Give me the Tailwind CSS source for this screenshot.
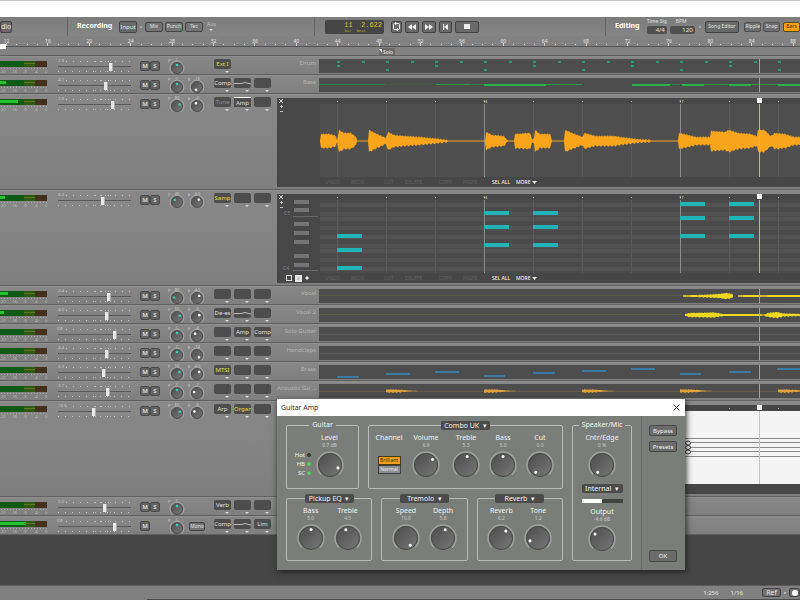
<!DOCTYPE html>
<html lang="en">
<head>
    <meta charset="UTF-8">
    <title>Song - Guitar Amp</title>
    <script src="https://cdn.jsdelivr.net/npm/@tailwindcss/browser@4"></script>
</head>
<body class="relative min-h-screen flex flex-col overflow-hidden bg-[#464646] font-['Noto_Sans','Open_Sans',sans-serif] text-[6px] leading-none text-[#e4e4e4]">

<!-- Window strip -->
<div class="h-[17px] border-t border-[#c8c8c8] bg-white"></div>

<!-- Toolbar -->
<header class="flex h-[19px] overflow-hidden bg-linear-to-b from-[#7c7c7c] to-[#858585] whitespace-nowrap">
    <div class="flex w-[68px] shrink-0 items-center border-r border-[#646464]">
        <button class="h-[12px] w-[12px] rounded-xs border border-[#454545] bg-[#6a6a6a] text-[7px]">dio</button>
    </div>
    <div class="flex flex-1 items-center border-r border-[#646464] pl-[9px]">
        <h2 class="w-[42px] pb-[3px] text-[7px] font-bold text-white">Recording</h2>
        <button class="h-[12px] w-[18px] rounded-xs border border-[#454545] bg-[#6a6a6a]">Input</button>
        <span class="mx-[3px] size-[2px] bg-[#a5a5a5]"></span>
        <div class="flex gap-[2px]">
            <button class="h-[10px] w-[18px] rounded-xs border border-[#454545] bg-[#747474] text-[5px]">Mix</button>
            <button class="h-[10px] w-[18px] rounded-xs border border-[#454545] bg-[#747474] text-[5px]">Punch</button>
            <button class="h-[10px] w-[18px] rounded-xs border border-[#454545] bg-[#747474] text-[5px]">Tec</button>
        </div>
        <button class="ml-1 flex flex-col items-center gap-[2px] text-[5px] text-[#c4c4c4]">Aux
            <svg class="h-[2px] w-[4px]"><path d="M0 0h4L2 2z" fill="#ddd"/></svg>
        </button>
    </div>
    <div class="flex w-[291px] shrink-0 items-center border-r border-[#646464] pl-[10px]">
        <div class="mr-[7px] flex h-[14px] w-[59px] flex-col items-end rounded-xs bg-[#454545] pt-px pr-[2px] font-['Liberation_Mono',monospace] text-[#d2c628]">
            <span class="text-[7px] leading-[8px] whitespace-pre">11  2.622</span>
            <span class="pr-[16px] text-[4px] leading-[4px] whitespace-pre text-[#b3a92c]">bar  beat</span>
        </div>
        <div class="flex gap-[3px]">
            <button aria-label="Loop" class="grid h-[12px] w-[11px] place-items-center rounded-xs border border-[#424242] bg-[#6a6a6a]">
                <svg class="h-[9px] w-[9px]" fill="none" stroke="#eee"><path d="M3 1.5H2.500A1 1 0 0 0 1.500 2.500V6.500A1 1 0 0 0 2.500 7.500H4M5 1.500H6.500A1 1 0 0 1 7.500 2.500V6.500A1 1 0 0 1 6.500 7.500H6"/><path d="M3 0l3 1.500-3 1.500zM6 6L3.500 7.500 6 9z" fill="#eee" stroke="none"/></svg>
            </button>
            <button aria-label="Rewind" class="grid h-[12px] w-[14px] place-items-center rounded-xs border border-[#424242] bg-[#6a6a6a]">
                <svg class="h-[6px] w-[8px]" fill="#eee"><path d="M4 0v6L0 3zM8 0v6L4 3z"/></svg>
            </button>
            <button aria-label="Forward" class="grid h-[12px] w-[14px] place-items-center rounded-xs border border-[#424242] bg-[#6a6a6a]">
                <svg class="h-[6px] w-[8px]" fill="#eee"><path d="M0 0v6l4-3zM4 0v6l4-3z"/></svg>
            </button>
            <button aria-label="To start" class="grid h-[12px] w-[13px] place-items-center rounded-xs border border-[#424242] bg-[#6a6a6a]">
                <svg class="h-[6px] w-[6px]" fill="#eee"><path d="M0 0h1v6H0zM5 0v6L1 3z"/></svg>
            </button>
            <button aria-label="Stop" class="grid h-[12px] w-[24px] place-items-center rounded-xs border border-[#424242] bg-[#6a6a6a]">
                <span class="h-[5px] w-[6px] bg-[#eee]"></span>
            </button>
        </div>
    </div>
    <div class="flex w-[194px] shrink-0 items-center pl-[9px]">
        <h2 class="w-[32px] pb-[3px] text-[7px] font-bold text-white">Editing</h2>
        <label class="flex w-[20px] flex-col text-[5px]">Time Sig
            <input value="4/4" class="mt-[2px] h-[8px] w-full rounded-xs bg-[#505050] pr-[2px] text-right text-[6px]">
        </label>
        <label class="ml-[3px] flex w-[25px] flex-col text-[5px]"><span class="pl-[6px]">BPM</span>
            <input value="120" class="mt-[2px] h-[8px] w-full rounded-xs bg-[#505050] pr-[2px] text-right text-[6px]">
        </label>
        <span class="mx-[4px] size-[2px] bg-[#a5a5a5]"></span>
        <button class="h-[12px] w-[35px] rounded-xs border border-[#424242] bg-[#6a6a6a] text-[5px]">Song Editor</button>
        <button class="ml-[5px] h-[10px] w-[17px] rounded-xs border border-[#505050] bg-[#6e6e6e] text-[5px]">Ripple</button>
        <button class="ml-[2px] h-[10px] w-[17px] rounded-xs border border-[#505050] bg-[#6e6e6e] text-[5px]">Snap</button>
        <button class="ml-[3px] h-[10px] w-[17px] rounded-xs border border-[#5c4618] bg-[#f5a318] text-[5px] text-[#3a2a08]">Bars</button>
    </div>
</header>

<!-- Ruler -->
<svg id="ruler" class="h-[20px] w-full shrink-0 bg-[#828282]"></svg>

<main id="tracks" class="flex flex-col"></main>

<div class="flex-1"></div>

<!-- Status bar -->
<footer class="bg-[#808080]">
    <div class="flex h-[14px] items-center justify-end border-t border-[#5c5c5c] text-[6px]">
        <span class="mr-[12px]">1:256</span>
        <span class="mr-[19px]">1/16</span>
        <button class="h-[9px] w-[19px] rounded-xs border border-[#454545] bg-[#707070] text-[7px] leading-none">Ref</button>
        <span class="mx-[3px] size-[2px] bg-[#b5b5b5]"></span>
        <button aria-label="Record" class="grid h-[9px] w-[11px] place-items-center rounded-xs border border-[#454545] bg-[#707070]"><span class="size-[6px] rounded-full bg-white"></span></button>
    </div>
    <div class="ml-[147px] h-px bg-[#4c4c4c]"></div>
</footer>

<!-- Guitar Amp window -->
<section role="dialog" aria-label="Guitar Amp" class="absolute top-[399px] left-[277px] w-[408px] bg-[#7b7d7a] text-[7px] text-[#f0f0f0] shadow-[1px_2px_6px_#222]">
    <div class="flex h-[17px] items-center justify-between bg-white px-[4px] font-['Open_Sans',sans-serif] text-[7px] text-[#222]">
        <h2>Guitar Amp</h2>
        <button aria-label="Close" class="mr-px"><svg class="size-[7px]" stroke="#333" fill="none"><path d="M.5 .5l6 6M6.500 .5l-6 6"/></svg></button>
    </div>
    <div class="flex h-[154px] pl-[9px]">
        <div class="flex flex-1 flex-col gap-[5px] pt-[5px]">
            <div class="flex gap-[9px]">
                <fieldset class="flex h-[68px] w-[73px] rounded-xs border border-[#b9bbb8] pt-[4px]">
                    <legend class="mx-auto h-[9px] px-[3px] leading-[8px]">Guitar</legend>
                    <div class="flex">
                        <div class="flex w-[24px] flex-col items-end gap-[3px] pt-[18px] text-[6px] leading-[6px]">
                            <label class="flex items-center gap-[2px]">Hot <input type="checkbox" class="size-[4px] appearance-none rounded-full border border-[#333] bg-[#3b4a3b] checked:bg-[#5fe060]"></label>
                            <label class="flex items-center gap-[2px]">HB <input type="checkbox" checked class="size-[4px] appearance-none rounded-full border border-[#4cc850] bg-[#3b4a3b] checked:bg-[#5fe060]"></label>
                            <label class="flex items-center gap-[2px]">SC <input type="checkbox" checked class="size-[4px] appearance-none rounded-full border border-[#4cc850] bg-[#3b4a3b] checked:bg-[#5fe060]"></label>
                        </div>
                        <div data-knob="Level|0.7 dB|110"></div>
                    </div>
                </fieldset>
                <fieldset class="h-[68px] flex-1 rounded-xs border border-[#b9bbb8] pt-[4px]">
                    <legend class="mx-auto h-[9px]"><select aria-label="Amp model" class="block h-[9px] w-[49px] appearance-none rounded-xs bg-[#4b4b4b] text-center [text-align-last:center]"><option>Combo UK &nbsp;▾</option></select></legend>
                    <div class="flex justify-center pr-[2px]">
                        <div class="flex w-[37px] flex-col items-center">
                            <span class="leading-[7px]">Channel</span>
                            <button class="mt-[15px] h-[9px] w-[23px] border border-[#4a3810] bg-[#f0a01c] text-[5px] leading-none text-[#3c2b08]">Brilliant</button>
                            <button class="h-[9px] w-[23px] border border-[#444] bg-[#8b8b93] text-[5px] leading-none">Normal</button>
                        </div>
                        <div class="mr-[3px]" data-knob="Volume|6.6|50"></div>
                        <div data-knob="Treble|5.3|8"></div>
                        <div data-knob="Bass|5.0|0"></div>
                        <div data-knob="Cut|0.0|-150"></div>
                    </div>
                </fieldset>
            </div>
            <div class="grid grid-cols-3 gap-[9px]">
                <fieldset class="h-[67px] rounded-xs border border-[#b9bbb8] pt-[4px]">
                    <legend class="mx-auto h-[9px]"><select aria-label="Pickup EQ" class="block h-[9px] w-[49px] appearance-none rounded-xs bg-[#4b4b4b] text-center [text-align-last:center]"><option>Pickup EQ &nbsp;▾</option></select></legend>
                    <div class="flex justify-center">
                        <div data-knob="Bass|5.0|0"></div>
                        <div data-knob="Treble|4.5|-15"></div>
                    </div>
                </fieldset>
                <fieldset class="h-[67px] rounded-xs border border-[#b9bbb8] pt-[4px]">
                    <legend class="mx-auto h-[9px]"><select aria-label="Modulation" class="block h-[9px] w-[49px] appearance-none rounded-xs bg-[#4b4b4b] text-center [text-align-last:center]"><option>Tremolo &nbsp;▾</option></select></legend>
                    <div class="flex justify-center">
                        <div data-knob="Speed|10.0|150"></div>
                        <div data-knob="Depth|5.8|15"></div>
                    </div>
                </fieldset>
                <fieldset class="h-[67px] rounded-xs border border-[#b9bbb8] pt-[4px]">
                    <legend class="mx-auto h-[9px]"><select aria-label="Ambience" class="block h-[9px] w-[49px] appearance-none rounded-xs bg-[#4b4b4b] text-center [text-align-last:center]"><option>Reverb &nbsp;▾</option></select></legend>
                    <div class="flex justify-center">
                        <div data-knob="Reverb|6.2|35"></div>
                        <div data-knob="Tone|1.2|-110"></div>
                    </div>
                </fieldset>
            </div>
        </div>
        <fieldset class="mt-[5px] ml-[9px] h-[140px] w-[60px] rounded-xs border border-[#b9bbb8] pt-[4px]">
            <legend class="mx-auto h-[9px] px-[3px] leading-[8px] whitespace-nowrap">Speaker/Mic</legend>
            <div class="flex flex-col items-center">
                <div data-knob="Cntr/Edge|0 %|-150"></div>
                <select aria-label="Speaker" class="mt-[5px] h-[9px] w-[41px] appearance-none rounded-xs bg-[#4b4b4b] text-center [text-align-last:center]"><option>Internal &nbsp;▾</option></select>
                <div class="mt-[6px] mb-[5px] h-[4px] w-[41px] bg-[#424242]"><div class="h-full w-1/2 bg-white"></div></div>
                <div data-knob="Output|-4.6 dB|-55"></div>
            </div>
        </fieldset>
        <div class="ml-[9px] flex w-[44px] flex-col items-start border-l border-[#686a67] pt-[9px] pb-[8px] pl-[7px] text-[6px]">
            <button class="h-[11px] w-[28px] rounded-xs border border-[#484848] bg-[#6b6b6b] leading-none">Bypass</button>
            <button class="mt-[5px] h-[11px] w-[28px] rounded-xs border border-[#484848] bg-[#6b6b6b] leading-none">Presets</button>
            <button class="mt-auto h-[12px] w-[28px] rounded-xs border border-[#484848] bg-[#6b6b6b] leading-none">OK</button>
        </div>
    </div>
</section>

<!-- Shared gradients -->
<svg class="absolute size-0" aria-hidden="true">
    <defs>
        <linearGradient id="knobFill" x1="0" y1="0" x2="1" y2="1"><stop offset="0" stop-color="#4c4c4c"/><stop offset="1" stop-color="#787878"/></linearGradient>
    </defs>
</svg>

<script>
// slots: '' = empty, '~' = EQ curve, '*' = yellow, '-' = dimmed, '^' = highlighted top edge
const tracks = [
    { name: 'Drum', level: 0, fader: 52, vol: '-1.3', pan: 0, slots: ['*Ext I'], clip: drumClip },
    { name: 'Bass', level: 6, fader: 47, vol: '-4.1', pan: 0, send: -160, slots: ['Comp', '~', ''], clip: bassClip },
    { name: 'Guitar', level: 18, fader: 54, vol: '-1.0', pan: 60, send: -20, slots: ['-Tune', '^Amp', ''], editor: audioEditor },
    { name: 'Keys', level: 5, fader: 44, vol: '-6.2', pan: -45, send: 35, slots: ['*Samp', '', ''], editor: noteEditor },
    { name: 'Vocal', level: 8, fader: 50, vol: '-2.4', pan: -80, send: 45, slots: ['', '', ''], clip: vocalClip },
    { name: 'Vocal 2', level: 4, fader: 48, vol: '-4.0', pan: 65, send: 50, slots: ['De-es', '~', ''], clip: vocal2Clip },
    { name: 'Solo Guitar', level: 0, fader: 56, vol: '0.8', pan: 0, send: -40, slots: ['', 'Amp', 'Comp'], clip: emptyClip },
    { name: 'Handclaps', level: 0, fader: 48, vol: '-4.4', pan: 0, send: 140, slots: ['', '', ''], clip: emptyClip },
    { name: 'Brass', level: 0, fader: 45, vol: '-5.3', pan: 50, send: 45, slots: ['*MTSI', '', ''], clip: brassClip },
    { name: 'Acoustic Gu ...', level: 0, fader: 49, vol: '-2.7', pan: 0, send: -70, slots: ['', '', ''], clip: acousticClip, tall: true },
    { name: 'Organ', level: 0, fader: 35, vol: '-10.3', pan: 65, send: -60, slots: ['Arp', '*Organ', ''], editor: scoreEditor },
    { name: '', level: 0, fader: 46, vol: '-5.0', pan: 0, slots: ['Verb', '', ''] },
    { name: '', level: 26, fader: 56, vol: '0.8', pan: 0, master: true, slots: ['Comp', '~', 'Lim'] }
];

const PLAYHEAD = 440;
const range = (n) => [...Array(n).keys()];
const rect = (x, y, w, h, fill) => `<rect x="${x}" y="${y}" width="${w}" height="${h}" fill="${fill}"/>`;

// Envelope polygon around a centre line, points are [x, amplitude]
function wave(points, mid, fill, rough) {
    const top = [], bottom = [];
    for (let i = 0; i < points.length - 1; i++) {
        const [x1, a1] = points[i], [x2, a2] = points[i + 1];
        for (let x = x1; x < x2; x++) {
            const a = a1 + (a2 - a1) * (x - x1) / (x2 - x1);
            const n = a > 1 ? Math.sin(x * 2.3) * rough : 0;
            top.push(`${x},${(mid - a - n).toFixed(1)}`);
            bottom.unshift(`${x},${(mid + a + Math.cos(x * 1.7) * (a > 1 ? rough : 0)).toFixed(1)}`);
        }
    }
    return `<polygon points="${top.concat(bottom).join(' ')}" fill="${fill}"/>`;
}

function drumClip() {
    const color = '#2c9a79';
    return range(20).map(i => rect(18 + Math.round(i * 24.5), 2, 3, 2, color)).join('')
        + range(5).map(i => rect(18 + i * 98, 6, 3, 2, color)).join('')
        + range(5).map(i => rect(67 + i * 98, 10, 3, 2, color)).join('');
}
function bassClip() {
    return rect(0, 6, 66, 1, '#287d48') + rect(66, 6, 51, 1, '#425848')
        + rect(117, 6, 34, 1, '#239a45') + rect(151, 6, 14, 1, '#287d48')
        + rect(165, 6, 62, 2, '#2bb34c') + rect(227, 6, 36, 1, '#239a45')
        + rect(313, 6, 38, 2, '#2bb34c') + rect(351, 6, 12, 1, '#287d48')
        + rect(363, 6, 22, 2, '#2bb34c') + rect(385, 6, 25, 1, '#239a45')
        + rect(410, 6, 22, 2, '#2bb34c') + rect(432, 6, 27, 1, '#239a45') + rect(459, 6, 22, 2, '#2bb34c');
}
function vocalClip() {
    return rect(0, 6, 363, 1, '#5c5a4a')
        + wave([[364, .7], [378, 1], [390, 1.500], [400, 2], [407, 3], [413, 2], [415, 0]], 7, '#f0d722', .4)
        + wave([[419, .7], [430, 1], [445, .8], [460, 1], [482, 1]], 7, '#f0d722', .2);
}
function vocal2Clip() {
    return rect(0, 6, 363, 1, '#5c5a4a')
        + wave([[366, 1], [370, 2], [395, 2.500], [404, 1], [440, 1], [445, .5], [449, 2], [458, 3], [464, 1.500], [482, 1]], 7, '#f0d722', .4);
}
function emptyClip() {
    return rect(0, 7, 481, 1, '#5b5b5b');
}
function brassClip() {
    return [[18, 11, 22], [67, 8, 24], [116, 6, 24], [165, 10, 21], [214, 7, 22], [263, 5, 24], [312, 3, 24], [361, 8, 21], [410, 6, 22], [458, 3, 24]]
        .map(([x, y, w]) => rect(x, y, w, 2, '#3a7ba6')).join('');
}
function acousticClip() {
    const pluck = [[0, 1.500], [10, 1.500], [18, 1], [24, .4], [36, 0]];
    return rect(0, 7, 481, 1, '#605b4c')
        + range(5).map(i => wave(pluck.map(([x, a]) => [67 + i * 98 + x, a]), 7, '#e2a23a', .5)).join('');
}

function beatMarks() {
    return range(10).map(i => rect(17 + i * 49, 3, 1, 1, '#aaa')).join('')
        + `<g fill="#ddd" font-size="4"><text x="163" y="5">16</text><text x="359" y="5">17</text></g>`
        + rect(PLAYHEAD - 3, 0, 5, 5, '#fff');
}
function editorFrame(side, body, footer) {
    return `
        <div class="mt-[4px] flex h-[89px] min-w-0 flex-1 flex-col bg-[#474747]">
            <div class="flex min-h-0 flex-1">
                <div class="relative w-[43px] shrink-0">
                    <div class="flex w-[8px] flex-col items-center gap-[2px] pt-px">
                        <button aria-label="Close editor"><svg class="size-[4px]" stroke="#ddd"><path d="M0 0l4 4M4 0L0 4"/></svg></button>
                        <button aria-label="Zoom in"><svg class="size-[3px]" stroke="#bbb"><path d="M0 1.500h3M1.500 0v3"/></svg></button>
                        <button aria-label="Zoom out"><svg class="size-[3px]" stroke="#bbb"><path d="M0 1.500h3"/></svg></button>
                    </div>
                    ${side}
                </div>
                <div class="flex min-w-0 flex-1 flex-col">
                    <svg class="h-[6px] w-full">${beatMarks()}</svg>
                    <svg class="w-full flex-1">${body}</svg>
                </div>
            </div>
            ${footer}
        </div>`;
}
function editorFooter(tools) {
    return `
        <div class="flex h-[10px] items-center text-[5px] text-[#626262]">
            <div class="flex w-[48px] items-center gap-[3px] pl-[9px]">${tools}</div>
            <button class="w-[26px] text-left">UNDO</button>
            <button class="w-[33px] text-left">REDO</button>
            <button class="w-[21px] text-left">CUT</button>
            <button class="w-[34px] text-left">DELETE</button>
            <button class="w-[24px] text-left">COPY</button>
            <button class="w-[29px] text-left">PASTE</button>
            <button class="w-[24px] text-left font-medium text-[#eee]">SEL ALL</button>
            <button class="flex items-center gap-[2px] font-medium text-[#eee]">MORE <svg class="h-[3px] w-[5px]"><path d="M0 0h5L2.500 3z" fill="#e4e4e4"/></svg></button>
        </div>`;
}
function gridLines(height) {
    return range(10).map(i => rect(17 + i * 49, 0, 1, height, '#5a5a5a')).join('')
        + rect(164, 0, 1, height, '#8c8c8c') + rect(360, 0, 1, height, '#8c8c8c');
}
function audioEditor() {
    const env = [[0, .5], [1, 7], [10, 7], [16, 5], [17, .5], [19, 11], [24, 8], [31, 8], [36, 4], [37, .5], [48, .5], [49, 11], [57, 7], [66, 3], [68, 9], [74, 6], [84, 5], [100, 4], [115, 2.500], [127, 1], [128, .5],
        [165, .5], [166, 9], [172, 6], [184, 5], [187, 1], [188, .5], [194, .5], [195, 7], [210, 8], [212, 2], [214, 2], [215, 11], [220, 7], [230, 7], [232, .5], [244, .5], [245, 11], [252, 8], [263, 4], [264, 8], [275, 5], [294, 5], [300, 4], [316, 2], [330, 1], [331, .5],
        [358, .5], [359, 8], [368, 6], [376, 4], [390, 4], [391, 10], [405, 9], [409, 11], [418, 8], [430, 7], [437, 5], [438, 11], [444, 11], [451, 5], [455, 8], [465, 7], [474, 4], [482, 4]];
    const body = rect(0, 0, '100%', '100%', '#4f4f4f') + gridLines('100%') + wave(env, 37, '#f9a51c', .8) + rect(PLAYHEAD - 1, 0, 1, '100%', '#bdb696');
    return editorFrame('', body, editorFooter(''));
}
function noteEditor() {
    const blackKeys = [0, 8, 22, 31, 40, 54, 63];
    const chord = (x, ys) => ys.map(y => rect(x, y, 25, 4, '#1fb4b5')).join('');
    const body = rect(0, 0, '100%', '100%', '#4a4a4a')
        + [3, 12, 17, 26, 35, 44, 49, 58, 67].map(y => rect(0, y, '100%', 4, '#525252')).join('')
        + gridLines('100%')
        + chord(17, [34, 48, 66]) + chord(164, [11, 25, 43]) + chord(213, [11, 25, 43]) + chord(360, [2, 16, 34]) + chord(409, [2, 16, 34])
        + rect(PLAYHEAD - 1, 0, 1, '100%', '#bdb696');
    const keys = `<svg class="absolute top-[6px] left-0 h-[73px] w-[43px]">
            ${blackKeys.map(y => rect(17, y, 15, 4, '#747474')).join('')}
            ${rect(16, 16, 25, 1, '#666')}${rect(16, 70, 25, 1, '#666')}
            <g fill="#858585" font-size="5"><text x="7" y="15">C5</text><text x="6" y="70">C4</text></g>
        </svg>`;
    const tools = `
        <button aria-label="Select" class="size-[6px] border border-[#ddd]"></button>
        <button aria-label="Draw" class="grid size-[7px] place-items-center bg-[#e8e8e8]"><span class="size-[3px] rounded-full bg-[#bbb]"></span></button>
        <button aria-label="Erase"><svg class="size-[4px]"><path d="M2 0l2 2-2 2-2-2z" fill="#eee"/></svg></button>`;
    return editorFrame(keys, body, editorFooter(tools));
}
function scoreEditor() {
    const body = rect(0, 0, '100%', '100%', '#f4f4f4')
        + [27, 31, 36, 40, 45].map(y => rect(0, y, '100%', 1, '#8a8a8a')).join('')
        + `<g fill="#fff" stroke="#333"><ellipse cx="368" cy="32" rx="2.500" ry="2"/><ellipse cx="368" cy="36.500" rx="2.500" ry="2"/><ellipse cx="368" cy="41" rx="2.500" ry="2"/></g>`
        + rect(PLAYHEAD - 1, 0, 1, '100%', '#c4c4c4');
    return editorFrame('', body, '<div class="h-[10px]"></div>');
}

function smallKnob(letter, value, angle, color) {
    return `
        <div class="grid w-[20px]">
            <svg class="col-start-1 row-start-1 h-[19px] w-[20px]">
                <g fill="#d0d0d0" font-size="4"><text x="1" y="6">${letter}</text><text x="10" y="5" text-anchor="middle">${value}</text></g>
                <path d="M5.500 17.500a7 7 0 1 1 9 0" fill="none" stroke="#a6a6a6"/>
                <circle cx="10" cy="12" r="5.500" fill="url(#knobFill)" stroke="#505050"/>
                <circle cx="10" cy="9" r="1.300" fill="${color}" transform="rotate(${angle} 10 12)"/>
            </svg>
            <input type="range" aria-label="${letter}" min="-150" max="150" value="${angle}" class="col-start-1 row-start-1 w-full opacity-0">
        </div>`;
}
function slot(s) {
    const text = s.replace(/^[*^~-]/, '');
    const tone = s[0] === '*' ? 'text-[#e2e03c]' : s[0] === '-' ? 'text-[#8f8f8f]' : 'text-[#e0e0e0]';
    const edge = s[0] === '^' ? 'border-t border-white' : 'rounded-xs';
    const curve = '<svg class="h-[8px] w-full" fill="none" stroke="#bbb"><path d="M0 4.500h7l4-1 6 1.500"/></svg>';
    return `
        <div class="flex w-[17px] flex-col items-end gap-[2px]">
            <button class="h-[10px] w-full overflow-hidden bg-[#4d4d4d] text-[6px] leading-none whitespace-nowrap ${tone} ${edge}">${s[0] === '~' ? curve : text}</button>
            <svg class="mr-[2px] h-[2px] w-[4px]"><path d="M0 0h4L2 2z" fill="#ddd"/></svg>
        </div>`;
}
function strip(t) {
    return `
        <div class="flex h-[18px] w-[277px] shrink-0">
            <svg class="mt-[5px] h-[13px] w-[57px] shrink-0">
                ${rect(0, 0, 24, 6, '#0c5a14')}${rect(24, 0, 11, 6, '#2f5a16')}${rect(35, 0, 12, 6, '#43311c')}
                ${rect(0, 1, t.level, 3, '#22c32c')}${rect(24, 2, 11, 1, '#5c7a1c')}
                <path d="M1 7.500H48" stroke="#aaa" stroke-dasharray="1 2"/>
                <g fill="#bdbdbd" font-size="4"><text x="0" y="12">-22</text><text x="11" y="12">-16</text><text x="23" y="12">-9</text><text x="34" y="12">-4</text><text x="45" y="12">0</text></g>
            </svg>
            <div class="grid w-[83px] shrink-0">
                <svg class="col-start-1 row-start-1 h-[18px] w-[76px]">
                    <text x="0" y="6" fill="#d0d0d0" font-size="4">${t.vol}</text>
                    <path d="M9 5.500H74M1 15.500H74" stroke="#c4c4c4" stroke-dasharray="1 6"/>
                    <path d="M38 5.500H56M38 15.500H56" stroke="#b4b4b4" stroke-dasharray="1 4"/>
                    <path d="M1 10.500H74" stroke="#5a5a5a"/>
                </svg>
                <input type="range" aria-label="${t.name} volume" min="0" max="70" value="${t.fader}" class="col-start-1 row-start-1 mt-[6px] h-[9px] w-[74px] appearance-none bg-transparent [&::-webkit-slider-thumb]:h-[8px] [&::-webkit-slider-thumb]:w-[4px] [&::-webkit-slider-thumb]:appearance-none [&::-webkit-slider-thumb]:border-r [&::-webkit-slider-thumb]:border-[#aaa] [&::-webkit-slider-thumb]:bg-[#e8e8e8]">
            </div>
            <div class="mt-[5px] flex w-[27px] shrink-0 text-[6px] font-bold text-[#d4d4d4]">
                <button class="h-[10px] w-[10px] rounded-xs border border-[#4a4a4a] bg-[#636363] leading-none">M</button>
                ${t.master ? '' : '<button class="h-[10px] w-[10px] rounded-xs border border-[#4a4a4a] bg-[#636363] leading-none">S</button>'}
            </div>
            <div class="flex w-[47px] shrink-0">
                ${smallKnob('P', t.pan ? Math.abs(t.pan) : 'C', t.pan, '#3fd0b4')}
                ${t.send !== undefined ? smallKnob('E', '-' + Math.abs(t.send / 10), t.send, '#fff') : ''}
                ${t.master ? '<button class="mt-[6px] ml-[2px] h-[9px] w-[16px] rounded-xs border border-[#454545] bg-[#707070] text-[5px] leading-none">Mono</button>' : ''}
            </div>
            <div class="mt-[3px] flex gap-[3px]">${t.slots.map(slot).join('')}</div>
        </div>`;
}

document.getElementById('tracks').innerHTML = tracks.map(t => `
    <section class="flex shrink-0 border-b border-[#606060] bg-linear-to-b from-[#888888] to-[#7f7f7f] shadow-[inset_0_1px_#8f8f8f] ${t.editor ? 'h-[96px]' : t.tall ? 'h-[20px]' : 'h-[19px]'}">
        ${strip(t)}
        ${t.editor ? t.editor() : ''}
        ${t.clip ? `
            <h3 class="mt-[4px] w-[42px] shrink-0 pr-[3px] text-right text-[6px] leading-[7px] whitespace-nowrap text-[#b4b4b4]">${t.name}</h3>
            <svg class="mt-[3px] h-[14px] min-w-0 flex-1 bg-[#4d4d4d]">${t.clip()}${rect(PLAYHEAD, 0, 1, 14, '#a3a3a3')}</svg>` : ''}
    </section>
`).join('');

// Bar numbers every 41.4px, a tick for each bar
document.getElementById('ruler').innerHTML = range(20).map(i => `<text x="${(6.500 + i * 41.400).toFixed(1)}" y="7" fill="#e4e4e4" font-size="5" text-anchor="middle">${12 + i * 4}</text>`).join('')
    + range(78).map(i => rect(Math.round(6 + i * 10.350), i % 4 ? 8 : 7, 1, i % 4 ? 1 : 3, '#cfcfcf')).join('')
    + rect(0, 10, '100%', 1, '#555') + rect(0, 8, 6, 5, '#fff') + rect(0, 19, '100%', 1, '#606060')
    + rect(379, 12, 16, 7, '#6a6a6a') + '<path d="M379 13h3v4z" fill="#eee"/><text x="383" y="18" fill="#eee" font-size="5">Solo</text>';

// Large knobs of the amp window: label|value|angle
document.querySelectorAll('[data-knob]').forEach((el, i) => {
    const [label, value, angle] = el.dataset.knob.split('|');
    el.innerHTML = `
        <div class="flex w-[37px] flex-col items-center">
            <label for="knob-${i}" class="leading-[7px] whitespace-nowrap">${label}</label>
            <output class="mt-px mb-[3px] text-[5px] leading-[6px] text-[#c8c8c8]">${value}</output>
            <div class="grid">
                <svg class="col-start-1 row-start-1 size-[28px]">
                    <path d="M5 23.500a13 13 0 1 1 18 0" fill="none" stroke="#9fa19e" stroke-width="1.500"/>
                    <circle cx="14" cy="14" r="11.500" fill="url(#knobFill)" stroke="#4a4a4a"/>
                    <circle cx="14" cy="5.500" r="1.500" fill="#fff" transform="rotate(${angle} 14 14)"/>
                </svg>
                <input id="knob-${i}" type="range" min="-150" max="150" value="${angle}" class="col-start-1 row-start-1 w-[28px] opacity-0">
            </div>
        </div>`;
});
</script>

</body>
</html>
